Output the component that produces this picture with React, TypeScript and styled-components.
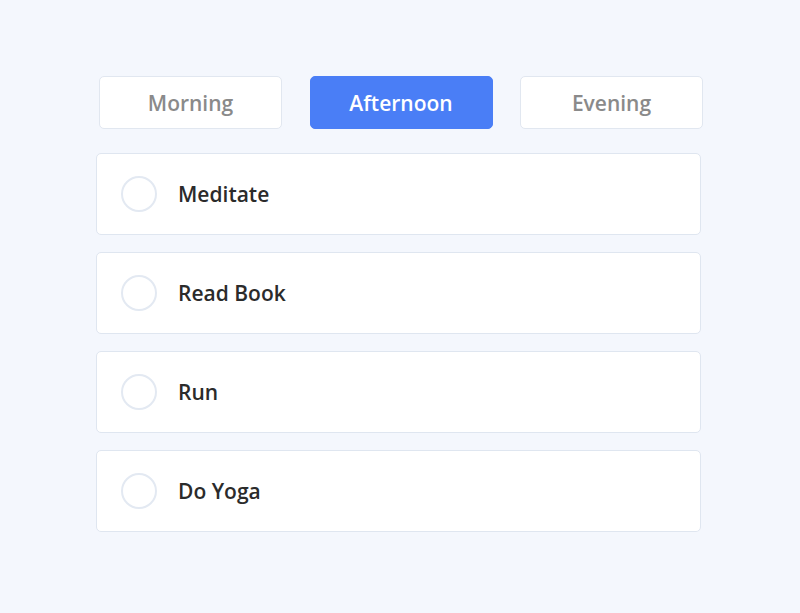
import { useState } from 'react';
import styled, { createGlobalStyle } from 'styled-components';

type Period = 'Morning' | 'Afternoon' | 'Evening';

const periods: Period[] = ['Morning', 'Afternoon', 'Evening'];
const tasks: string[] = ['Meditate', 'Read Book', 'Run', 'Do Yoga'];

const App = () => {
	const [active, setActive] = useState<Period>('Afternoon');
	const [done, setDone] = useState<string[]>([]);

	const toggle = (task: string) => {
		setDone((prev) => (prev.includes(task) ? prev.filter((t) => t !== task) : [...prev, task]));
	};

	return (
		<>
			<GlobalStyle />
			<Page>
				<Tabs>
					{periods.map((p) => (
						<Tab key={p} $active={p === active} onClick={() => setActive(p)}>
							{p}
						</Tab>
					))}
				</Tabs>
				<List>
					{tasks.map((task) => (
						<Card key={task} onClick={() => toggle(task)}>
							<Check $checked={done.includes(task)} />
							<TaskName>{task}</TaskName>
						</Card>
					))}
				</List>
			</Page>
		</>
	);
};

const GlobalStyle = createGlobalStyle`
	html, body {
		margin: 0;
		padding: 0;
		background: #f4f7fd;
		font-family: 'Open Sans', 'Noto Sans', sans-serif;
	}
`;

const Page = styled.main`
	width: 605px;
	margin-left: 96px;
	padding-top: 76px;
	display: flex;
	flex-direction: column;
	gap: 24px;
`;

const Tabs = styled.div`
	display: grid;
	grid-template-columns: repeat(3, 183px);
	gap: 27.5px;
	padding-left: 3px;
`;

const Tab = styled.button<{ $active: boolean }>`
	height: 53px;
	border-radius: 5px;
	border: 1px solid ${({ $active }) => ($active ? '#4a7ef6' : '#e1e7f0')};
	background: ${({ $active }) => ($active ? '#4a7ef6' : '#ffffff')};
	color: ${({ $active }) => ($active ? '#ffffff' : '#8a8a8a')};
	font-family: 'Open Sans', sans-serif;
	font-size: 21px;
	font-weight: 600;
	cursor: pointer;
`;

const List = styled.div`
	display: flex;
	flex-direction: column;
	gap: 17px;
`;

const Card = styled.div`
	height: 82px;
	box-sizing: border-box;
	display: flex;
	align-items: center;
	gap: 21px;
	padding-left: 24px;
	background: #ffffff;
	border: 1px solid #dfe6f0;
	border-radius: 5px;
	cursor: pointer;
`;

const Check = styled.span<{ $checked: boolean }>`
	width: 36px;
	height: 36px;
	box-sizing: border-box;
	border-radius: 50%;
	border: 2px solid ${({ $checked }) => ($checked ? '#4a7ef6' : '#e3e9f2')};
	background: ${({ $checked }) => ($checked ? '#4a7ef6' : 'transparent')};
`;

const TaskName = styled.span`
	font-size: 21px;
	font-weight: 600;
	color: #2b2b2b;
`;

export default App;
